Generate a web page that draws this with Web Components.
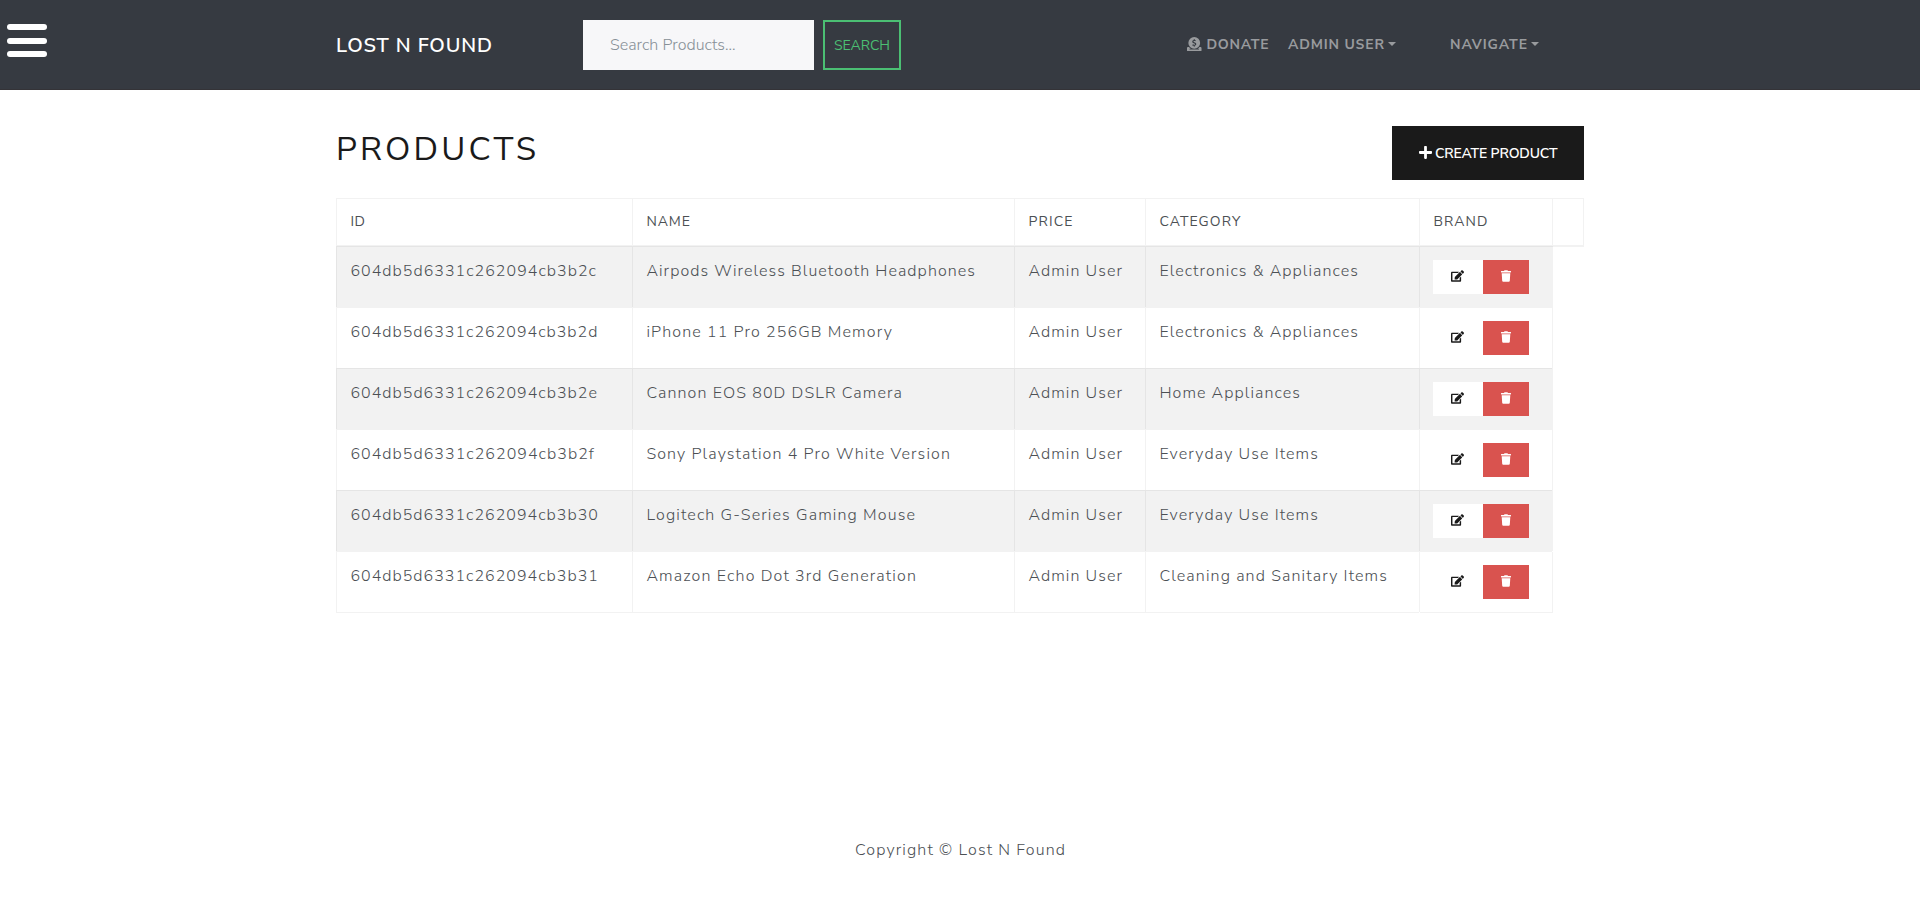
<!DOCTYPE html>
<html lang="en"><head><meta charset="utf-8"><title>Products</title>
<style>
html,body{margin:0;background:#fff}
body{font-family:"Nunito Sans",Lato,"Open Sans",sans-serif;font-size:16px;font-weight:300;color:#4c5054}
</style></head><body>
<store-page></store-page>
<script>
const define=(name,html,setup)=>{
  const t=document.createElement('template');t.innerHTML=html;
  customElements.define(name,class extends HTMLElement{
    constructor(){super();this.attachShadow({mode:'open'}).append(t.content.cloneNode(true));}
    connectedCallback(){if(setup)setup(this,this.shadowRoot);}
  });
};
const icons={
 plus:['0 0 448 512','<path d="M416 208H272V64c0-17.67-14.33-32-32-32h-32c-17.67 0-32 14.33-32 32v144H32c-17.67 0-32 14.33-32 32v32c0 17.67 14.33 32 32 32h144v144c0 17.67 14.33 32 32 32h32c17.67 0 32-14.33 32-32V304h144c17.67 0 32-14.33 32-32v-32c0-17.67-14.33-32-32-32z"/>'],
 edit:['0 0 576 512','<path d="M402.6 83.2l90.2 90.2c3.8 3.8 3.8 10 0 13.8L274.4 405.6l-92.8 10.3c-12.4 1.4-22.9-9.1-21.5-21.5l10.3-92.8L388.8 83.2c3.8-3.8 10-3.8 13.8 0zm162-22.9l-48.8-48.8c-15.2-15.2-39.9-15.2-55.2 0l-35.4 35.4c-3.8 3.8-3.8 10 0 13.8l90.2 90.2c3.8 3.8 10 3.8 13.8 0l35.4-35.4c15.2-15.3 15.2-40 0-55.2zM384 346.2V448H64V128h229.8c3.2 0 6.2-1.3 8.5-3.5l40-40c7.6-7.6 2.2-20.5-8.5-20.5H48C21.5 64 0 85.5 0 112v352c0 26.5 21.5 48 48 48h352c26.5 0 48-21.5 48-48V306.2c0-10.7-12.9-16-20.5-8.5l-40 40c-2.2 2.3-3.5 5.3-3.5 8.5z"/>'],
 trash:['0 0 448 512','<path d="M432 32H312l-9.4-18.7A24 24 0 0 0 281.1 0H166.8a23.72 23.72 0 0 0-21.4 13.3L136 32H16A16 16 0 0 0 0 48v32a16 16 0 0 0 16 16h416a16 16 0 0 0 16-16V48a16 16 0 0 0-16-16zM53.2 467a48 48 0 0 0 47.9 45h245.8a48 48 0 0 0 47.9-45L416 128H32z"/>'],
 donate:['0 0 512 512','<path fill-rule="evenodd" d="M256 0a208 208 0 1 0 0 416a208 208 0 1 0 0-416zM240 75h31v29c18 1 34 7 47 17l-23 31c-26-18-64-17-66 5c-1 36 101 18 99 94c-1 36-29 56-57 60v31h-31v-30c-22-2-42-10-57-23l26-31c27 24 74 23 76-2c2-40-100-18-99-96c0-32 25-53 54-56z"/><path d="M32 352h40c17 27 40 49 66 64H98c-6 0-10 4-10 8v8c0 4 4 8 10 8h316c6 0 10-4 10-8v-8c0-4-4-8-10-8h-40c27-15 49-37 66-64h40c18 0 32 14 32 32v96c0 18-14 32-32 32H32c-18 0-32-14-32-32v-96c0-18 14-32 32-32z"/>']
};
define('ui-icon','<style>:host{display:block;flex:none}svg{display:block;width:100%;height:100%;fill:currentColor}</style><svg></svg>',(h,r)=>{
  const [box,body]=icons[h.getAttribute('name')],s=r.querySelector('svg');s.setAttribute('viewBox',box);s.innerHTML=body;
});
/* A label tracked out to the measure given in its width attribute. */
define('tracked-text','<style>:host{display:block;flex:none;white-space:nowrap}span{display:inline-block}</style><span><slot></slot></span>',(h,r)=>{
  const s=r.querySelector('span'),w=+h.getAttribute('width'),n=h.textContent.length;
  h.style.width=w+'px';
  s.style.letterSpacing=((w-s.getBoundingClientRect().width)/(n-1)).toFixed(3)+'px';
});
define('menu-button','<style>:host{display:flex;flex-direction:column;justify-content:space-between;width:40px;height:33px}i{height:6px;border-radius:3px;background:#fff}</style><i></i><i></i><i></i>');
define('search-form',`<style>:host{display:flex;gap:9px;height:50px}
.field{box-sizing:border-box;width:231px;padding:0 0 0 27px;background:#f7f7f9;color:#879097;display:flex;align-items:center;font-size:16px}
.go{box-sizing:border-box;width:78px;border:2px solid #4bbf73;color:#4bbf73;display:flex;align-items:center;justify-content:center;font-size:14px;font-weight:400}</style>
<div class="field"><tracked-text width="125.5">Search Products...</tracked-text></div><div class="go"><tracked-text width="56">SEARCH</tracked-text></div>`);
define('nav-link',`<style>:host{display:flex;align-items:center;font-size:14px;font-weight:700;color:#999b9e;line-height:20px}
.caret{display:none;width:0;border:4px solid transparent;border-top-color:currentColor;border-bottom:0;margin:-3px 0 0 4px}:host([menu]) .caret{display:block}
::slotted(ui-icon){width:14.5px;height:14.5px;margin:-2px 5px 0 0}</style><slot></slot><span class="caret"></span>`);
define('site-header',`<style>:host{display:flex;box-sizing:border-box;height:90px;background:#363a41;border-bottom:1px solid #343337}
menu-button{margin:24px 0 0 7px}
.brand{margin:33px 0 0 289px;font-size:20px;line-height:26px;font-weight:600;color:#fff}
search-form{margin:20px 0 0 91px}
nav{display:flex;margin:35px 0 0 286px;height:20px}
nav-link:nth-child(2){margin-left:19.5px}nav-link:nth-child(3){margin-left:54px}</style>
<menu-button></menu-button><tracked-text class="brand" width="156">LOST N FOUND</tracked-text><search-form></search-form>
<nav><nav-link><ui-icon name="donate"></ui-icon><tracked-text width="62">DONATE</tracked-text></nav-link>
<nav-link menu><tracked-text width="96">ADMIN USER</tracked-text></nav-link><nav-link menu><tracked-text width="77">NAVIGATE</tracked-text></nav-link></nav>`);
define('create-button',`<style>:host{box-sizing:border-box;display:flex;align-items:center;width:192px;height:54px;padding-left:27px;background:#1a1a1a;color:#fff;font-size:14px;font-weight:600}
ui-icon{width:13px;height:15px;margin-right:3px;margin-top:-2px}</style><ui-icon name="plus"></ui-icon><tracked-text width="122.5">CREATE PRODUCT</tracked-text>`);
define('row-actions',`<style>:host{display:flex;height:34px}div{display:flex;align-items:center;box-sizing:border-box;padding-bottom:2px}
.edit{width:50px;background:#fff;color:#1a1a1a;padding-left:18px}.del{width:46px;background:#d9534f;color:#fff;padding-left:18px}
.edit ui-icon{width:13px;height:12px}.del ui-icon{width:10px;height:12px}</style>
<div class="edit"><ui-icon name="edit"></ui-icon></div><div class="del"><ui-icon name="trash"></ui-icon></div>`);
const rows=[
 ['604db5d6331c262094cb3b2c',246,'Airpods Wireless Bluetooth Headphones',329,'Electronics & Appliances',199],
 ['604db5d6331c262094cb3b2d',247.5,'iPhone 11 Pro 256GB Memory',246,'Electronics & Appliances',199],
 ['604db5d6331c262094cb3b2e',247,'Cannon EOS 80D DSLR Camera',256,'Home Appliances',141],
 ['604db5d6331c262094cb3b2f',244,'Sony Playstation 4 Pro White Version',304,'Everyday Use Items',159],
 ['604db5d6331c262094cb3b30',248,'Logitech G-Series Gaming Mouse',269,'Everyday Use Items',159],
 ['604db5d6331c262094cb3b31',248,'Amazon Echo Dot 3rd Generation',270,'Cleaning and Sanitary Items',228]];
const tx=(s,w)=>`<tracked-text width="${w-.5}">${s.replace('&','&amp;')}</tracked-text>`;
define('product-table',`<style>:host{display:block;--line:rgba(0,0,0,.05)}
table{border-collapse:separate;border-spacing:0;table-layout:fixed;width:1248px}
th,td{border:0 solid var(--line);border-width:1px 0 0 1px;box-sizing:border-box;padding:0 0 0 13px;text-align:left;vertical-align:top}
th{height:48px;border-bottom-width:1px;padding-top:13px;font-size:14px;font-weight:400;line-height:20px}
th:last-child{border-right-width:1px;box-shadow:0 1px 0 var(--line)}
td{height:61px;padding-top:13px;line-height:23px}
tracked-text{padding-left:.4px}
td:last-child{box-shadow:1px 0 0 var(--line)}
tbody tr:last-child td{box-shadow:0 1px 0 var(--line)}
tbody tr:last-child td:last-child{box-shadow:1px 1px 0 var(--line)}
tbody tr:nth-child(odd) td{background:var(--line)}</style>
<table><colgroup><col style="width:296px"><col style="width:382px"><col style="width:131px"><col style="width:274px"><col style="width:133px"><col></colgroup>
<thead><tr><th>${tx('ID',15)}</th><th>${tx('NAME',44)}</th><th>${tx('PRICE',44.5)}</th><th>${tx('CATEGORY',81.5)}</th><th>${tx('BRAND',54.5)}</th><th></th></tr></thead>
<tbody>${rows.map(r=>`<tr><td>${tx(r[0],r[1])}</td><td>${tx(r[2],r[3])}</td><td>${tx('Admin User',94)}</td><td>${tx(r[4],r[5])}</td><td><row-actions></row-actions></td></tr>`).join('')}</tbody></table>`);
define('store-page',`<style>:host{display:block;height:913px;overflow:hidden}
main{width:1248px;margin:0 auto;padding-top:36px;height:650px}
.top{display:flex;justify-content:space-between;height:72px}
h1{margin:0;padding:4px 0 0;font-size:33px;line-height:40px;font-weight:400;color:#1a1a1a}
footer{display:flex;justify-content:center;margin-top:63px;line-height:22px}</style>
<site-header></site-header><main><div class="top"><h1><tracked-text width="200">PRODUCTS</tracked-text></h1><create-button></create-button></div><product-table></product-table></main>
<footer><tracked-text width="210">Copyright © Lost N Found</tracked-text></footer>`);
</script></body></html>
